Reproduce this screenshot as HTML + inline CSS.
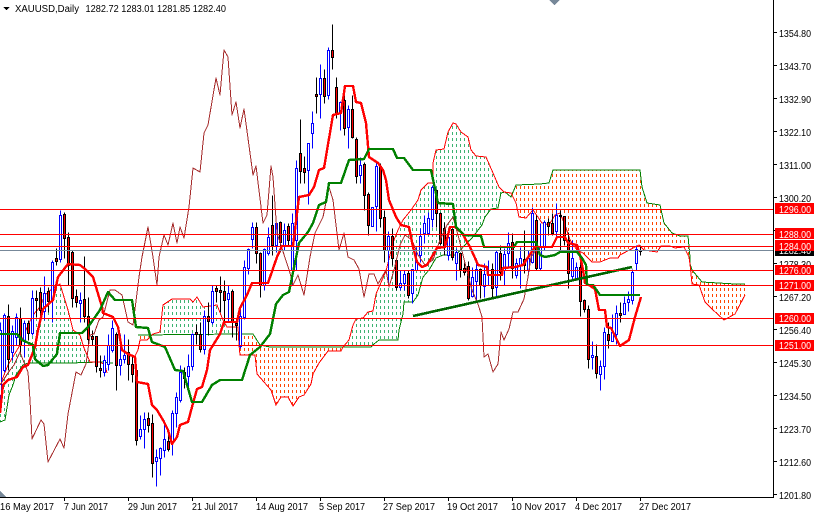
<!DOCTYPE html>
<html><head><meta charset="utf-8"><style>
html,body{margin:0;padding:0;background:#fff;width:814px;height:514px;overflow:hidden}
svg{display:block}
text{font-family:"Liberation Sans",Arial,sans-serif;font-size:10px;fill:#000}
.w{fill:#fff}
polyline{fill:none}
</style></head><body>
<svg width="814" height="514" viewBox="0 0 814 514" shape-rendering="crispEdges">
<defs>
<pattern id="g" patternUnits="userSpaceOnUse" width="4" height="6"><rect width="1" height="3" fill="#3CB371"/></pattern>
<pattern id="o" patternUnits="userSpaceOnUse" width="4" height="6"><rect width="1" height="3" fill="#FF4500"/></pattern>
</defs>
<rect width="814" height="514" fill="#fff"/>
<g>
<polygon fill="url(#g)" points="0,385 8,365 20,345 28,325 33,315 40,307 45,295 53,288 60,284 68,310 73,330 80,335 84,348 90,362 100,362 70,363 28,363 23,365 16,375 13,385 9,395 5,420 0,422"/>
<polygon fill="url(#o)" points="138,335 150,334 147,340 140,340 138,350"/>
<polygon fill="url(#g)" points="153,334 160,332 163,305 172,299 190,299 193,302 197,297 203,307 217,305 223,320 227,327 238,327 239,334"/>
<polygon fill="url(#o)" points="239,334 253,334 260,345 270,347 343,347 341,351 328,351 319,363 313,374 311,384 304,395 299,397 293,406 288,397 281,397 276,405 271,390 257,374 255,355 240,355 239,345"/>
<polygon fill="url(#g)" points="343,347 349,340 353,325 356,319 363,318 368,312 373,311 376,294 379,287 386,271 390,255 394,240 398,230 403,220 411,210 418,200 421,190 428,183 433,183 433,163 436,150 444,149 448,132 453,123 456,124 461,132 468,137 471,150 476,156 486,157 493,173 499,187 504,192 510,192 505,192 501,193 498,208 491,209 485,217 482,225 472,238 465,245 456,255 443,255 436,258 429,270 423,277 418,295 413,302 404,302 403,314 399,330 398,340 379,340 374,344 371,347"/>
<polygon fill="url(#o)" points="510,192 516,185 540,184 549,183 553,170 640,170 642,187 647,203 660,205 664,223 672,233 680,236 688,236 690,257 690,264 692,270 690,264 689,257 684,247 675,248 670,246 661,246 657,252 644,250 639,245 635,247 620,255 618,258 610,258 600,262 592,262 583,253 577,250 570,240 565,225 560,213 555,215 549,225 542,223 533,210 526,218 519,217 516,203 511,193"/>
<polygon fill="url(#o)" points="692,270 702,282 735,284 745,284 745,295 735,314 724,320 712,309 705,302 699,285 692,284"/>
<polyline stroke="#008000" stroke-width="1" points="0,422 5,420 9,395 13,385 16,375 23,365 28,363 70,363 100,362 113,363"/>
<polyline stroke="#008000" stroke-width="1" points="138,335 240,334 253,334 260,345 270,347 371,347 374,344 379,340 398,340 399,330 403,314 404,302 413,302 418,295 423,277 429,270 436,258 443,255 456,255 465,245 472,238 482,225 485,217 491,209 498,208 501,193 505,192 511,197 516,185 540,184 549,183 553,170 640,170 642,187 647,203 660,205 664,223 672,233 680,236 688,236 690,257 690,264 692,270 702,282 735,284 745,284"/>
<polyline stroke="#FF0000" stroke-width="1" points="0,385 8,365 20,345 28,325 33,315 40,307 45,295 53,288 60,284 68,310 73,330 80,335 84,348 90,362 100,362 105,365 107,373"/>
<polyline stroke="#FF0000" stroke-width="1" points="134,358 138,350 140,340 147,340 153,334 160,332 163,305 172,299 190,299 193,302 197,297 203,307 217,305 223,320 227,327 238,327 239,345 240,355 255,355 257,374 271,390 276,405 281,397 288,397 293,406 299,397 304,395 311,384 313,374 319,363 328,351 341,351 343,347 349,340 353,325 356,319 363,318 368,312 373,311 376,294 379,287 386,271 390,255 394,240 398,230 403,220 411,210 418,200 421,190 428,183 433,183 433,163 436,150 444,149 448,132 453,123 456,124 461,132 468,137 471,150 476,156 486,157 493,173 499,187 504,192 511,193 516,203 519,217 526,218 533,210 542,223 549,225 555,215 560,213 565,225 570,240 577,250 583,253 592,262 600,262 610,258 618,258 620,255 635,247 639,245 644,250 657,252 661,246 670,246 675,248 684,247 689,257 690,264 692,284 699,285 705,302 712,309 724,320 735,314 745,295"/>
</g>
<g transform="translate(.5,.5)">
<path fill="none" stroke="#0000FF" d="M0 322V400M4 313V372M12 325V360M16 313V345M24 320V357M32 290V335M44 276V320M52 260V322M60 210V262M80 292V322M104 355V376M108 334V370M112 320V352M120 334V375M124 334V363M140 415V439M144 412V448M156 449V486M160 447V475M164 420V457M172 410V455M176 392V427M180 365V402M188 354V387M192 333V370M204 310V354M212 285V324M228 285V322M240 307V348M244 260V319M248 248V274M252 222V248M264 248V290M268 227V255M276 222V252M284 223V250M292 213V285M296 160V270M308 143V204M312 111V148M320 64V118M328 47V99M340 101V130M348 105V148M360 157V183M372 207V226M376 162V231M388 231V285M400 270V290M404 270V290M412 269V303M416 247V270M420 228V262M424 215V243M428 212V235M432 185V227M448 235V260M456 248V280M472 267V297M476 258V302M484 263V297M488 260V285M496 250V298M504 248V285M508 232V267M516 258V278M520 247V288M528 250V272M532 207V263M540 223V270M544 220V250M556 203V238M572 240V280M576 262V280M592 341V369M600 360V390M604 327V379M612 314V341M616 305V344M624 296V314M628 291V311M632 269V304M636 245V270"/>
<path fill="none" stroke="#000" d="M8 304V370M20 307V354M28 320V340M36 290V317M40 287V317M48 287V312M56 248V265M64 212V258M68 232V285M72 250V307M76 289V307M84 256V322M88 297V345M92 330V345M96 336V372M100 355V377M116 332V390M128 339V380M132 354V382M136 370V445M148 412V432M152 414V477M168 434V451M184 367V388M196 324V344M200 322V352M208 302V335M216 285V302M220 276V312M224 280V322M232 289V337M236 318V340M256 222V263M260 252V297M272 195V255M280 221V252M288 223V245M300 119V183M304 156V183M316 77V113M324 69V103M332 24V69M336 77V118M344 88V135M352 95V138M356 137V183M364 162V210M368 192V235M380 163V227M384 210V262M392 228V265M396 258V290M408 270V298M436 189V227M440 212V245M444 222V255M452 228V260M460 252V277M464 262V275M468 261V300M480 268V298M492 263V298M500 245V280M512 233V278M524 230V273M536 215V270M548 218V235M552 213V235M560 210V250M564 216V245M568 232V288M580 257V316M584 299V312M588 305V368M596 344V378M608 322V348M620 302V322M640 245V255"/>
<path fill="#fff" stroke="#0000FF" d="M-1 330h2V395h-2zM3 315h2V370h-2zM11 331h2V352h-2zM15 317h2V337h-2zM23 323h2V340h-2zM31 298h2V333h-2zM43 293h2V311h-2zM51 262h2V300h-2zM59 215h2V259h-2zM79 300h2V303h-2zM103 360h2V372h-2zM107 345h2V364h-2zM111 328h2V350h-2zM119 359h2V365h-2zM123 355h2V359h-2zM139 429h2V436h-2zM143 419h2V429h-2zM155 457h2V461h-2zM159 448h2V458h-2zM163 439h2V450h-2zM171 413h2V441h-2zM175 397h2V413h-2zM179 372h2V400h-2zM187 366h2V376h-2zM191 334h2V366h-2zM203 316h2V349h-2zM211 291h2V322h-2zM227 293h2V299h-2zM239 316h2V346h-2zM243 267h2V317h-2zM247 249h2V268h-2zM251 227h2V239h-2zM263 249h2V285h-2zM267 237h2V253h-2zM275 223h2V245h-2zM283 230h2V245h-2zM291 223h2V270h-2zM295 168h2V240h-2zM307 143h2V170h-2zM311 123h2V133h-2zM319 78h2V94h-2zM327 50h2V95h-2zM339 102h2V113h-2zM347 109h2V127h-2zM359 165h2V175h-2zM371 207h2V226h-2zM375 166h2V206h-2zM387 236h2V250h-2zM399 283h2V287h-2zM403 274h2V283h-2zM411 269h2V293h-2zM415 260h2V270h-2zM419 236h2V255h-2zM423 223h2V233h-2zM427 218h2V233h-2zM431 187h2V219h-2zM447 237h2V255h-2zM455 252h2V263h-2zM471 277h2V296h-2zM475 269h2V281h-2zM483 274h2V286h-2zM495 252h2V287h-2zM503 254h2V270h-2zM507 243h2V253h-2zM515 263h2V275h-2zM519 258h2V265h-2zM527 258h2V270h-2zM531 213h2V262h-2zM539 247h2V268h-2zM543 222h2V247h-2zM555 215h2V231h-2zM571 258h2V276h-2zM575 267h2V278h-2zM591 355h2V357h-2zM599 366h2V374h-2zM603 332h2V366h-2zM611 332h2V341h-2zM615 313h2V334h-2zM623 303h2V314h-2zM627 299h2V302h-2zM631 272h2V300h-2zM635 249h2V263h-2z"/>
<path fill="#FF0000" stroke="#000" d="M7 316h2V359h-2zM19 318h2V345h-2zM27 323h2V333h-2zM35 298h2V300h-2zM39 292h2V310h-2zM47 291h2V301h-2zM55 258h2V261h-2zM63 214h2V238h-2zM67 237h2V265h-2zM71 252h2V298h-2zM75 296h2V302h-2zM83 299h2V316h-2zM87 316h2V339h-2zM91 336h2V339h-2zM95 336h2V366h-2zM99 368h2V370h-2zM115 334h2V365h-2zM127 352h2V364h-2zM131 364h2V374h-2zM135 370h2V440h-2zM147 418h2V425h-2zM151 423h2V463h-2zM167 441h2V449h-2zM183 372h2V378h-2zM195 332h2V334h-2zM199 334h2V349h-2zM207 316h2V321h-2zM215 288h2V291h-2zM219 290h2V292h-2zM223 291h2V300h-2zM231 291h2V322h-2zM235 323h2V325h-2zM255 227h2V253h-2zM259 253h2V285h-2zM271 225h2V245h-2zM279 222h2V242h-2zM287 226h2V240h-2zM299 153h2V171h-2zM303 168h2V172h-2zM315 94h2V96h-2zM323 78h2V96h-2zM331 50h2V57h-2zM335 87h2V113h-2zM343 100h2V128h-2zM351 109h2V137h-2zM355 139h2V176h-2zM363 164h2V195h-2zM367 194h2V225h-2zM379 167h2V218h-2zM383 217h2V250h-2zM391 236h2V258h-2zM395 260h2V287h-2zM407 273h2V295h-2zM435 190h2V213h-2zM439 213h2V243h-2zM443 228h2V245h-2zM451 229h2V257h-2zM459 253h2V269h-2zM463 268h2V272h-2zM467 266h2V298h-2zM479 269h2V285h-2zM491 269h2V288h-2zM499 253h2V272h-2zM511 242h2V268h-2zM523 259h2V265h-2zM535 220h2V268h-2zM547 222h2V226h-2zM551 223h2V233h-2zM559 215h2V216h-2zM563 216h2V240h-2zM567 240h2V273h-2zM579 267h2V301h-2zM583 300h2V309h-2zM587 309h2V359h-2zM595 356h2V373h-2zM607 334h2V340h-2zM619 313h2V315h-2zM639 250h2V251h-2z"/>
</g>
<g stroke-linejoin="round">
<polyline stroke="#A52A2A" stroke-width="1" points="0,385 10,370 14,365 20,352 23,360 28,372 30,400 32,439 41,420 44,424 48,462 60,439 64,448 68,414 76,372 81,375 86,364 90,335 94,334 99,320 103,317 110,290 115,290 122,295 128,322 133,325 139,277 142,257 148,227 153,257 157,285 159,257 164,235 168,245 173,223 177,243 180,227 184,238 189,207 193,168 200,172 204,133 208,125 216,78 220,95 224,50 228,57 232,115 236,102 240,128 244,109 253,175 256,166 263,223 267,215 271,166 273,177 277,233 290,273 293,285 298,275 304,295 310,257 315,233 323,217 329,187 333,200 339,250 344,233 348,257 354,260 359,269 364,297 369,274 374,274 378,284 386,270 389,287 394,270 400,245 405,235 412,240 418,255 425,265 433,260 440,240 447,225 453,217 458,235 463,255 468,275 472,290 478,304 482,317 484,357 488,354 493,372 498,364 501,332 504,340 509,329 513,312 518,312 524,299 528,277 531,257 536,250"/>
<polyline stroke="#FF0000" stroke-width="2.4" points="0,413 3,385 8,380 17,377 23,367 28,365 35,347 38,330 43,309 53,300 58,277 68,264 80,265 85,269 93,277 102,307 103,313 113,317 118,327 122,350 128,354 135,357 137,382 148,384 152,405 157,410 163,420 168,430 172,444 177,437 180,425 188,422 192,407 197,389 202,387 207,370 210,350 220,334 224,322 237,322 240,308 247,295 252,283 268,283 277,257 282,246 293,246 299,197 309,195 314,187 319,170 324,168 333,115 341,113 345,86 353,86 356,102 361,103 366,123 369,157 378,163 383,170 386,180 389,200 396,217 401,225 409,227 413,247 417,262 422,267 427,265 437,248 445,247 450,227 455,227 462,233 470,247 475,258 478,265 487,267 488,275 502,275 503,268 515,267 523,265 535,247 552,247 557,237 565,237 568,243 577,245 580,255 583,270 585,283 589,285 595,289 599,310 605,310 607,327 611,328 620,346 629,340 635,317 641,297"/>
<polyline stroke="#008000" stroke-width="2.4" points="0,334 17,334 22,340 33,345 35,359 43,366 48,365 57,354 60,333 82,333 88,327 100,310 108,292 115,300 132,300 136,327 148,328 152,342 165,347 175,370 183,371 192,402 202,402 212,385 220,380 242,380 250,355 260,347 270,334 276,304 283,295 289,292 299,243 308,232 313,223 319,205 326,202 329,183 341,183 349,160 364,159 369,149 393,149 397,158 404,158 413,170 431,170 438,203 453,204 456,227 464,235 481,236 484,247 514,247 517,242 536,242 540,255 545,257 555,255 560,252 577,252 582,258 586,265 587,285 593,285 600,295 640,295"/>
<polyline stroke="#006400" stroke-width="2.6" points="413,316 632,267"/>
</g>
<g fill="#FF0000">
<rect x="0" y="209" width="773" height="1"/><rect x="0" y="234" width="773" height="1"/><rect x="0" y="246" width="773" height="1"/>
<rect x="0" y="270" width="773" height="1"/><rect x="0" y="285" width="773" height="1"/><rect x="0" y="318" width="773" height="1"/><rect x="0" y="345" width="773" height="1"/>
</g>
<rect x="0" y="250" width="773" height="1" fill="#778899"/>
<polygon points="549,0 560,0 554.5,5" fill="#778899"/>
<polygon points="0,491 6,497 0,497" fill="#778899"/>
<polygon points="3,7 10,7 6.5,10" fill="#000"/>
<rect x="773" y="0" width="1" height="498" fill="#000"/>
<rect x="0" y="497" width="773" height="1" fill="#000"/>
<path stroke="#000" fill="none" d="M774 32.5h3M774 65.5h3M774 98.5h3M774 131.5h3M774 164.5h3M774 197.5h3M774 230.5h3M774 263.5h3M774 296.5h3M774 329.5h3M774 362.5h3M774 395.5h3M774 428.5h3M774 461.5h3M774 494.5h3M64.5 498v3M128.5 498v3M192.5 498v3M256.5 498v3M320.5 498v3M384.5 498v3M448.5 498v3M512.5 498v3M576.5 498v3M640.5 498v3"/>
<g shape-rendering="auto">
<text x="15" y="12" textLength="64" lengthAdjust="spacingAndGlyphs">XAUUSD,Daily</text>
<text x="85.5" y="12" textLength="140.5" lengthAdjust="spacingAndGlyphs">1282.72 1283.01 1281.85 1282.40</text>
<text x="779" y="37" textLength="32" lengthAdjust="spacingAndGlyphs">1354.80</text>
<text x="779" y="70" textLength="32" lengthAdjust="spacingAndGlyphs">1343.70</text>
<text x="779" y="103" textLength="32" lengthAdjust="spacingAndGlyphs">1332.90</text>
<text x="779" y="136" textLength="32" lengthAdjust="spacingAndGlyphs">1322.10</text>
<text x="779" y="169" textLength="32" lengthAdjust="spacingAndGlyphs">1311.00</text>
<text x="779" y="202" textLength="32" lengthAdjust="spacingAndGlyphs">1300.20</text>
<text x="779" y="235" textLength="32" lengthAdjust="spacingAndGlyphs">1289.40</text>
<text x="779" y="268" textLength="32" lengthAdjust="spacingAndGlyphs">1278.30</text>
<text x="779" y="301" textLength="32" lengthAdjust="spacingAndGlyphs">1267.20</text>
<text x="779" y="334" textLength="32" lengthAdjust="spacingAndGlyphs">1256.40</text>
<text x="779" y="367" textLength="32" lengthAdjust="spacingAndGlyphs">1245.30</text>
<text x="779" y="400" textLength="32" lengthAdjust="spacingAndGlyphs">1234.50</text>
<text x="779" y="433" textLength="32" lengthAdjust="spacingAndGlyphs">1223.70</text>
<text x="779" y="466" textLength="32" lengthAdjust="spacingAndGlyphs">1212.60</text>
<text x="779" y="499" textLength="32" lengthAdjust="spacingAndGlyphs">1201.80</text>
<rect x="775" y="245" width="39" height="11" fill="#000"/>
<text class="w" x="779" y="254" textLength="32" lengthAdjust="spacingAndGlyphs">1282.40</text>
<rect x="775" y="203" width="39" height="11" fill="#FF0000"/>
<text class="w" x="779" y="213" textLength="32" lengthAdjust="spacingAndGlyphs">1296.00</text>
<rect x="775" y="228" width="39" height="11" fill="#FF0000"/>
<text class="w" x="779" y="238" textLength="32" lengthAdjust="spacingAndGlyphs">1288.00</text>
<rect x="775" y="240" width="39" height="11" fill="#FF0000"/>
<text class="w" x="779" y="250" textLength="32" lengthAdjust="spacingAndGlyphs">1284.00</text>
<rect x="775" y="265" width="39" height="10" fill="#FF0000"/>
<text class="w" x="779" y="274" textLength="32" lengthAdjust="spacingAndGlyphs">1276.00</text>
<rect x="775" y="280" width="39" height="11" fill="#FF0000"/>
<text class="w" x="779" y="289" textLength="32" lengthAdjust="spacingAndGlyphs">1271.00</text>
<rect x="775" y="313" width="39" height="11" fill="#FF0000"/>
<text class="w" x="779" y="322" textLength="32" lengthAdjust="spacingAndGlyphs">1260.00</text>
<rect x="775" y="340" width="39" height="11" fill="#FF0000"/>
<text class="w" x="779" y="349" textLength="32" lengthAdjust="spacingAndGlyphs">1251.00</text>
<text x="0" y="510" textLength="54" lengthAdjust="spacingAndGlyphs">16 May 2017</text>
<text x="64" y="510" textLength="44" lengthAdjust="spacingAndGlyphs">7 Jun 2017</text>
<text x="128" y="510" textLength="49" lengthAdjust="spacingAndGlyphs">29 Jun 2017</text>
<text x="192" y="510" textLength="46" lengthAdjust="spacingAndGlyphs">21 Jul 2017</text>
<text x="256" y="510" textLength="52" lengthAdjust="spacingAndGlyphs">14 Aug 2017</text>
<text x="319" y="510" textLength="46" lengthAdjust="spacingAndGlyphs">5 Sep 2017</text>
<text x="383" y="510" textLength="52" lengthAdjust="spacingAndGlyphs">27 Sep 2017</text>
<text x="447" y="510" textLength="51" lengthAdjust="spacingAndGlyphs">19 Oct 2017</text>
<text x="511" y="510" textLength="55" lengthAdjust="spacingAndGlyphs">10 Nov 2017</text>
<text x="575" y="510" textLength="47" lengthAdjust="spacingAndGlyphs">4 Dec 2017</text>
<text x="639" y="510" textLength="52" lengthAdjust="spacingAndGlyphs">27 Dec 2017</text>
</g>
</svg>
</body></html>
